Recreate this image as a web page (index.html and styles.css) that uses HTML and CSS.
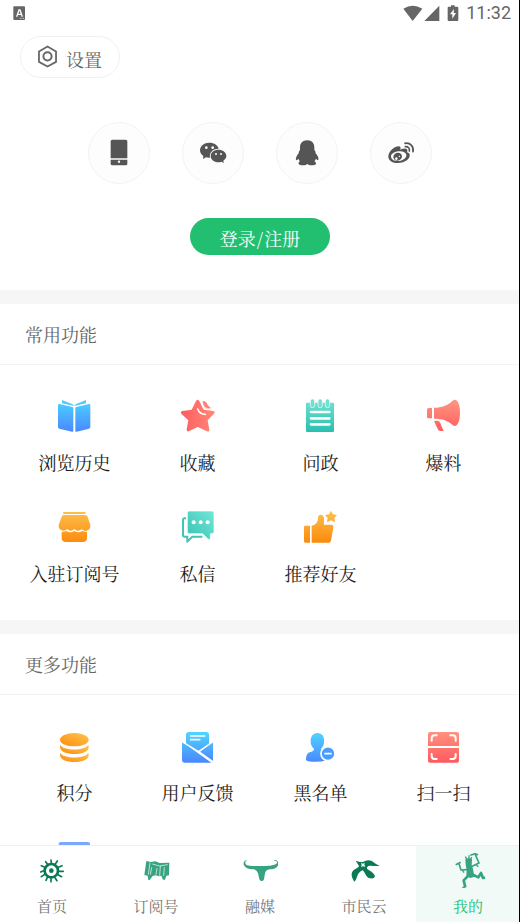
FILE: index.html
```html
<!DOCTYPE html>
<html lang="zh-CN">
<head>
<meta charset="utf-8">
<meta name="viewport" content="width=device-width, initial-scale=1">
<title>我的</title>
<link rel="stylesheet" href="styles.css">
</head>
<body>
<svg class="defs" width="0" height="0" aria-hidden="true">
  <defs>
    <linearGradient id="blue" x1="0" y1="0" x2="0" y2="1"><stop offset="0" stop-color="#4ccbff"/><stop offset="1" stop-color="#4a88ff"/></linearGradient>
    <linearGradient id="blueTall" gradientUnits="userSpaceOnUse" x1="0" y1="66" x2="0" y2="158"><stop offset="0" stop-color="#4fd6ff"/><stop offset="1" stop-color="#4a86ff"/></linearGradient>
    <linearGradient id="red" gradientUnits="userSpaceOnUse" x1="0" y1="62" x2="0" y2="158"><stop offset="0" stop-color="#ff9580"/><stop offset="1" stop-color="#ff5a5f"/></linearGradient>
    <linearGradient id="star" x1="0" y1="0" x2="1" y2="0"><stop offset="0" stop-color="#ff5c60"/><stop offset="1" stop-color="#ff8878"/></linearGradient>
    <linearGradient id="teal" gradientUnits="userSpaceOnUse" x1="0" y1="60" x2="0" y2="158"><stop offset="0" stop-color="#6ee3d3"/><stop offset="1" stop-color="#27bfae"/></linearGradient>
    <linearGradient id="tealSide" x1="0" y1="1" x2="1" y2="0"><stop offset="0" stop-color="#35c3b2"/><stop offset="1" stop-color="#74e6d8"/></linearGradient>
    <linearGradient id="orange" gradientUnits="userSpaceOnUse" x1="0" y1="62" x2="0" y2="158"><stop offset="0" stop-color="#ffc14e"/><stop offset="1" stop-color="#fb8a0c"/></linearGradient>
    <linearGradient id="coin" x1="0" y1="1" x2="1" y2="0"><stop offset="0" stop-color="#fc8c0e"/><stop offset="1" stop-color="#ffc550"/></linearGradient>
  </defs>
</svg>

<header class="status">
  <svg class="status-app" viewBox="40 17 39 45" aria-hidden="true"><rect x="41" y="18" width="35" height="41" rx="3" fill="#666"/><path d="M51 49l7-20h3l7 20M53 42h12" fill="none" stroke="#fff" stroke-width="4"/><path d="M60 54h13" stroke="#fff" stroke-width="2" stroke-dasharray="3 2"/></svg>
  <div class="status-right">
    <svg class="status-signal" viewBox="69 12 111 51" aria-hidden="true"><path d="M70 23Q98 6 127 23L98 60z M178 14v46h-45z" fill="#666"/></svg>
    <svg class="status-battery" viewBox="203 12 36 51" aria-hidden="true"><path d="M215 13h11v4h8q3 0 3 3v37q0 3-3 3h-26q-3 0-3-3V20q0-3 3-3h7z" fill="#666"/><path d="M224 24l-12 16h7v13l11-17h-7z" fill="#fff"/></svg>
    <span class="time">11:32</span>
  </div>
</header>

<main class="page">
  <section class="account">
    <button class="settings" type="button">
      <svg viewBox="110 134 64 69" aria-hidden="true"><path d="M142 138l26 15v32l-26 14-26-14v-32z" fill="none" stroke="#686868" stroke-width="5.500" stroke-linejoin="round"/><circle cx="142" cy="168" r="12.500" fill="none" stroke="#686868" stroke-width="6"/></svg>
      <span>设置</span>
    </button>
    <div class="logins">
      <button class="login" type="button" aria-label="手机登录"><svg viewBox="74 83 90 90" aria-hidden="true"><path d="M99 88h40q5 0 5 5v51H94V93q0-5 5-5zM94 148h50v12q0 5-5 5H99q-5 0-5-5z"/><circle cx="119" cy="154" r="3.500" fill="#fff"/></svg></button>
      <button class="login" type="button" aria-label="微信登录"><svg viewBox="356 83 90 90" aria-hidden="true"><path d="M390 97c-16 0-28 10-28 23 0 7 4 13 10 17l-1 9 9-5q6 2 12 1c-3-15 9-28 26-27-2-10-13-18-28-18z"/><path d="M417 118c-13 0-23 8-23 19s10 19 23 19q6 0 10-2l6 5-1-8c6-4 9-9 9-14 0-11-11-19-24-19z"/><g fill="#fff"><circle cx="381" cy="112" r="4"/><circle cx="400" cy="112" r="4"/><circle cx="410" cy="131" r="3"/><circle cx="425" cy="131" r="3"/></g></svg></button>
      <button class="login" type="button" aria-label="QQ登录"><svg viewBox="97 83 90 90" aria-hidden="true"><path d="M143 90c-15 0-22 10-22 21v8c-3 3-4 6-4 10-6 7-10 16-8 20 2 2 5-2 7-4 1 3 3 6 5 8-4 2-5 4-4 7 1 5 21 7 26 1 5 6 25 4 26-1 0-3-1-5-5-7 2-2 4-5 5-8 2 2 5 6 7 3 2-4-2-13-8-19 0-4-1-7-4-10v-8c0-11-7-21-21-21z"/></svg></button>
      <button class="login" type="button" aria-label="微博登录"><svg viewBox="380 83 90 90" aria-hidden="true"><path fill-rule="evenodd" d="M387 137c1-14 19-29 31-29 6 0 7 4 5 10 8-4 17-5 20-1 2 3 1 6 0 9 6 2 9 5 8 11-2 12-18 21-35 21-17 1-30-8-29-21zm8 2c1 9 11 14 24 13 13-2 23-9 22-18-1-8-12-12-24-11-13 2-23 8-22 16z"/><path fill-rule="evenodd" d="M416 127c-8 0-14 6-14 13s6 11 12 11c8 0 14-6 14-13 0-6-5-11-12-11zm-5 14a4 4 0 1 0 .1 0zm9-5a2 2 0 1 0 .1 0z"/><path d="M437 99c15-3 27 9 24 25M438 109c8-1 14 5 12 13" fill="none" stroke="#555" stroke-width="5" stroke-linecap="round"/></svg></button>
    </div>
    <button class="signin" type="button"><span>登录</span><span>/</span><span>注册</span></button>
  </section>

  <section class="group">
    <h2>常用功能</h2>
    <div class="grid">
      <a class="item" href="#"><svg viewBox="171 354 108 108" aria-hidden="true"><path fill="url(#blue)" d="M174 375q0-4 4-3l39 9q3 1 3 4v67q0 4-4 3l-38-9q-4-1-4-4zM271 375q0-4-4-3l-38 9q-3 1-3 4v67q0 4 4 3l37-9q4-1 4-4z"/><path fill="#52caff" d="M186 360l32 13 4 5-36-8zM258 360l-31 13-4 5 35-8z"/></svg><span>浏览历史</span></a>
      <a class="item" href="#"><svg viewBox="540 354 108 108" aria-hidden="true"><path fill="url(#star)" d="M588 363q5-7 10 0l13 26 29 4q7 2 2 8l-19 20 5 28q0 8-7 5l-28-13-27 13q-7 2-6-6l5-27-21-20q-4-6 3-8l28-4z"/><path d="M606 362q14-1 18 13 5 7 12 8-11 7-22 0-6-9-8-21z" fill="#ff8175" stroke="#fff" stroke-width="2"/><path d="M593 387q6 16 23 16" fill="none" stroke="#fff" stroke-width="5" stroke-linecap="round"/></svg><span>收藏</span></a>
      <a class="item" href="#"><svg viewBox="129 54 108 108" aria-hidden="true"><path fill="url(#teal)" d="M141 68h78q3 0 3 3v81q0 4-4 4h-76q-4 0-4-4V71q0-3 3-3z"/><g fill="#74dfd0" stroke="#fff" stroke-width="2"><rect x="151" y="57" width="13" height="26" rx="6"/><rect x="174" y="57" width="13" height="26" rx="6"/><rect x="196" y="57" width="13" height="26" rx="6"/></g><path d="M153 96h55M153 115h55M153 133h55" stroke="#fff" stroke-width="8" stroke-linecap="round"/></svg><span>问政</span></a>
      <a class="item" href="#"><svg viewBox="498 54 108 108" aria-hidden="true"><path fill="url(#red)" d="M506 84h10v31h-10q-5 0-5-5V89q0-5 5-5zM522 83c24 0 41-7 56-21 10-8 22 3 22 36s-12 46-22 37c-14-13-31-19-56-19zM522 123q16-3 19 5 2 7 10 25h-10q-4 0-6-3-7-13-13-27z"/></svg><span>爆料</span></a>
      <a class="item" href="#"><svg viewBox="171 57 108 108" aria-hidden="true"><path fill="url(#orange)" d="M192 66h62q3 0 3 3t-3 3h-62q-3 0-3-3t3-3zM190 75h66q5 0 7 5l8 25q2 14-13 18-8 0-13-5-5 4-11 4t-11-5q-5 5-11 5t-10-5q-5 5-12 5-16-3-14-17l9-25q2-5 5-5zM185 125q9 1 14-2 6 4 12 4t12-4q6 4 12 4t11-4q7 3 15 2v18q0 13-13 13h-50q-13 0-13-13z"/></svg><span>入驻订阅号</span></a>
      <a class="item" href="#"><svg viewBox="540 57 108 108" aria-hidden="true"><path d="M558 85h-4q-5 0-5 5v45q0 5 5 5h8v15l15-15h30" fill="none" stroke="#3dc5b5" stroke-width="6" stroke-linejoin="round"/><path fill="url(#tealSide)" stroke="#fff" stroke-width="2" d="M568 63h68q6 0 6 6v56q0 6-6 6h-5v15q-3 4-7 1l-16-16h-40q-6 0-6-6V69q0-6 6-6z"/><g fill="#fff"><circle cx="581" cy="97" r="6"/><circle cx="602" cy="97" r="6"/><circle cx="623" cy="97" r="6"/></g></svg><span>私信</span></a>
      <a class="item" href="#"><svg viewBox="129 57 108 108" aria-hidden="true"><path fill="url(#orange)" d="M136 107h14v51h-14q-4 0-4-4v-43q0-4 4-4zM155 107c13-3 18-9 19-23 0-13 18-13 18 2v18h23q6 1 5 8l-7 40q-1 6-8 6h-50zM213 62l6 11 12 2-8 9 2 13-12-6-12 6 2-13-8-9 12-2z"/></svg><span>推荐好友</span></a>
    </div>
  </section>

  <section class="group">
    <h2>更多功能</h2>
    <div class="grid">
      <a class="item" href="#"><svg viewBox="171 54 108 108" aria-hidden="true"><g fill="url(#coin)"><ellipse cx="223" cy="89" rx="43" ry="20"/><path d="M181 104c7 19 76 19 84 0 3 11-1 19-15 24-17 6-38 5-54 0-14-5-18-14-15-24z"/><path d="M181 128c7 19 76 19 84 0 3 11-1 19-15 24-17 6-38 5-54 0-14-5-18-14-15-24z"/></g></svg><span>积分</span></a>
      <a class="item" href="#"><svg viewBox="540 54 108 108" aria-hidden="true"><path fill="url(#blueTall)" d="M567 66h52q8 0 8 8v29l-32 21-37-20V74q0-8 9-8zM546 98q0-3 3-1l85 61h-81q-7 0-7-7zM639 98q0-3-3-1l-37 29 40 28z"/><path d="M546 95l50 30 43-30" fill="none" stroke="#fff" stroke-width="4"/><path d="M596 125l43 31" stroke="#fff" stroke-width="5"/><path d="M572 78h42M572 89h27" stroke="#fff" stroke-width="5" stroke-linecap="round"/></svg><span>用户反馈</span></a>
      <a class="item" href="#"><svg viewBox="129 54 108 108" aria-hidden="true"><path fill="url(#blueTall)" d="M172 69c15 0 21 11 20 24 1 12-4 19-9 23 0 7 8 7 17 9v26q-28 8-58 2-6-1-4-8 1-16 13-19 12-3 11-10c-6-5-11-13-10-23 0-13 7-24 20-24z"/><circle cx="204" cy="131" r="21" fill="#4a9cff" stroke="#fff" stroke-width="5"/><path d="M195 131h18" stroke="#fff" stroke-width="5" stroke-linecap="round"/></svg><span>黑名单</span></a>
      <a class="item" href="#"><svg viewBox="498 54 108 108" aria-hidden="true"><path fill="url(#red)" d="M510 66h81q6 0 6 6v36h-93V72q0-6 6-6zM504 114h93v38q0 6-6 6h-81q-6 0-6-6z"/><path d="M515 92V85q0-9 9-9h6M571 76h7q9 0 9 9v7M515 132v6q0 9 9 9h6M571 147h7q9 0 9-9v-6" fill="none" stroke="#fff" stroke-width="6" stroke-linecap="round"/></svg><span>扫一扫</span></a>
      <a class="item" href="#" aria-label="更多"><svg viewBox="171 0 108 108" aria-hidden="true"><rect x="176" y="9" width="94" height="92" rx="6" fill="#7aa7ff"/></svg></a>
    </div>
  </section>
</main>

<nav class="tabs">
  <a class="tab" href="#"><svg viewBox="102 66 108 108" aria-hidden="true"><g fill="none" stroke="#0a7a55"><circle cx="154" cy="122" r="20" stroke-width="8"/><path stroke-width="5" stroke-linecap="round" d="M154 99l-1-9M166 102l6-9M175 112l11-5M177 124h13M174 134l11 6M165 143l6 9M153 145v10M142 142l-4 9M133 134l-9 6M131 122l-9 4M133 111l-9-4M142 102l-5-7"/></g><circle cx="154" cy="122" r="7" fill="#0a7a55"/></svg><span>首页</span></a>
  <a class="tab" href="#"><svg viewBox="413 66 108 108" aria-hidden="true"><path fill="#38a380" d="M438 93l13 3 14-2 13 5 29-1-1 38-8 1-4 12h-6l-5-12-6 2-12-3-8 2-9 12h-4l-2-13-10-2z"/><g fill="none" stroke="#fff" stroke-width="2"><path d="M449 98l-5 36M456 102l22 6 24-4M454 112l-4 22M470 114l-3 20M492 112l-2 26"/><path d="M480 108l-2 29"/></g></svg><span>订阅号</span></a>
  <a class="tab" href="#"><svg viewBox="725 66 108 108" aria-hidden="true"><path fill="#38a380" d="M743 91c-10-3-16 6-12 15 4 8 13 12 25 12 10 0 14 4 17 12l4 18q2 6 7 5 5 1 7-5l3-18c2-8 7-12 17-12 13-1 23-7 23-17 0-8-7-12-14-9 10 0 13 5 8 9-10 6-23 7-47 7-16 0-34 1-42-3-7-5-5-13 4-14z"/></svg><span>融媒</span></a>
  <a class="tab" href="#"><svg viewBox="256 66 108 108" aria-hidden="true"><path fill="#0a7a55" d="M285 92q12 5 22 4 11-8 25-4c8 4 15 12 25 15-12 3-24-1-34 1q-6 4-4 8c8 6 18 10 23 20 3 10-9 11-18 8-9-5-11-17-18-23-9 3-14 10-17 20q-3 10-8 14c-6-9-11-22-6-30 5-9 17-9 20-17q-4-7-10-16z"/><path fill="#fff" d="M301 99l6 2 5-3-1 6 3 6-7-1-6 2 2-6z"/></svg><span>市民云</span></a>
  <a class="tab active" href="#" aria-current="page"><svg viewBox="567 66 108 108" aria-hidden="true"><g fill="none" stroke="#38a380" stroke-linejoin="round"><path stroke-width="5" d="M584 104l15-7M594 101l6 19 20-1M629 111l25-12-11-25M628 76l14-5 9 3"/><path stroke-width="8" d="M625 134l-17 17 5 21M632 132l20 10 8-13 6 15 6-1"/><path stroke-width="4" d="M604 173l10-3M613 80l5 9M624 76v12M632 81l-4 9M604 120l5 8M646 105l6 5"/></g><path fill="#38a380" d="M613 88q11-7 20 0l-1 17 4 12 4 23-12 4-12-5 1-19-3-16z"/></svg><span>我的</span></a>
</nav>
</body>
</html>
```
FILE: styles.css
```css
* {
  box-sizing: border-box;
}

body {
  position: relative;
  margin: 0;
  height: 100vh;
  display: flex;
  flex-direction: column;
  background: #fff;
  color: #1c1c1c;
  font-family: "Noto Serif CJK SC", "Noto Serif SC", "Source Han Serif SC", "Noto Sans CJK SC", serif;
  font-size: 18px;
  line-height: 24px;
}

/* screen edge */
body::after {
  content: "";
  position: absolute;
  top: 0;
  right: 0;
  bottom: 0;
  width: 1px;
  background: #000;
}

.defs {
  position: absolute;
}

button {
  border: 0;
  padding: 0;
  background: none;
  font: inherit;
  color: inherit;
}

a {
  color: inherit;
  text-decoration: none;
}

svg {
  display: block;
  flex: none;
}

.status {
  flex: none;
  display: flex;
  align-items: center;
  justify-content: space-between;
  height: 26px;
  padding: 0 9px 0 13px;
}

.status-app {
  width: 13px;
  height: 15px;
}

.status-right {
  display: flex;
  align-items: center;
  gap: 7px;
}

.status-signal {
  width: 37px;
  height: 17px;
}

.status-battery {
  width: 12px;
  height: 17px;
}

.time {
  color: #666;
  font-family: Roboto, sans-serif;
  font-size: 18px;
}

.page {
  flex: 1;
  min-height: 0;
  overflow: hidden;
}

.account {
  display: flex;
  flex-direction: column;
  align-items: center;
  padding: 10px 20px 35px;
}

.settings {
  align-self: flex-start;
  display: flex;
  align-items: center;
  gap: 8px;
  height: 42px;
  padding: 0 17px 0 16px;
  border: 1px solid #f1f1f1;
  border-radius: 21px;
  color: #666;
}

.settings svg {
  width: 21px;
  height: 23px;
  margin-bottom: 2px;
}

.settings span {
  padding-top: 4px;
}

.logins {
  display: flex;
  gap: 32px;
  margin-top: 44px;
}

.login {
  display: flex;
  align-items: center;
  justify-content: center;
  width: 62px;
  height: 62px;
  border: 1px solid #f3f3f3;
  border-radius: 50%;
  background: #fdfdfd;
}

.login svg {
  width: 30px;
  height: 30px;
  fill: #555;
}

.signin {
  display: flex;
  align-items: center;
  justify-content: center;
  gap: 1px;
  width: 140px;
  height: 37px;
  margin-top: 34px;
  padding-top: 2px;
  border-radius: 19px;
  background: #23bf70;
  color: #fff;
}

.group {
  border-top: 14px solid #f6f6f6;
}

.group h2 {
  margin: 0;
  padding: 18px 25px;
  border-bottom: 1px solid #f3f3f3;
  color: #666;
  font-size: 18px;
  font-weight: 400;
}

.grid {
  display: grid;
  grid-template-columns: repeat(4, 1fr);
  row-gap: 35px;
  padding: 33px 15px 35px 13px;
}

.item {
  display: flex;
  flex-direction: column;
  align-items: center;
  gap: 16px;
  white-space: nowrap;
}

.item svg {
  width: 36px;
  height: 36px;
}

.tabs {
  flex: none;
  display: grid;
  grid-template-columns: repeat(5, 1fr);
  border-top: 1px solid #f0f0f0;
}

.tab {
  display: flex;
  flex-direction: column;
  align-items: center;
  gap: 6px;
  padding: 6px 0 4px;
  color: #777;
  font-size: 15px;
}

.tab svg {
  width: 36px;
  height: 36px;
}

.tab.active {
  background: #f1faf7;
  color: #23bf70;
}
```
